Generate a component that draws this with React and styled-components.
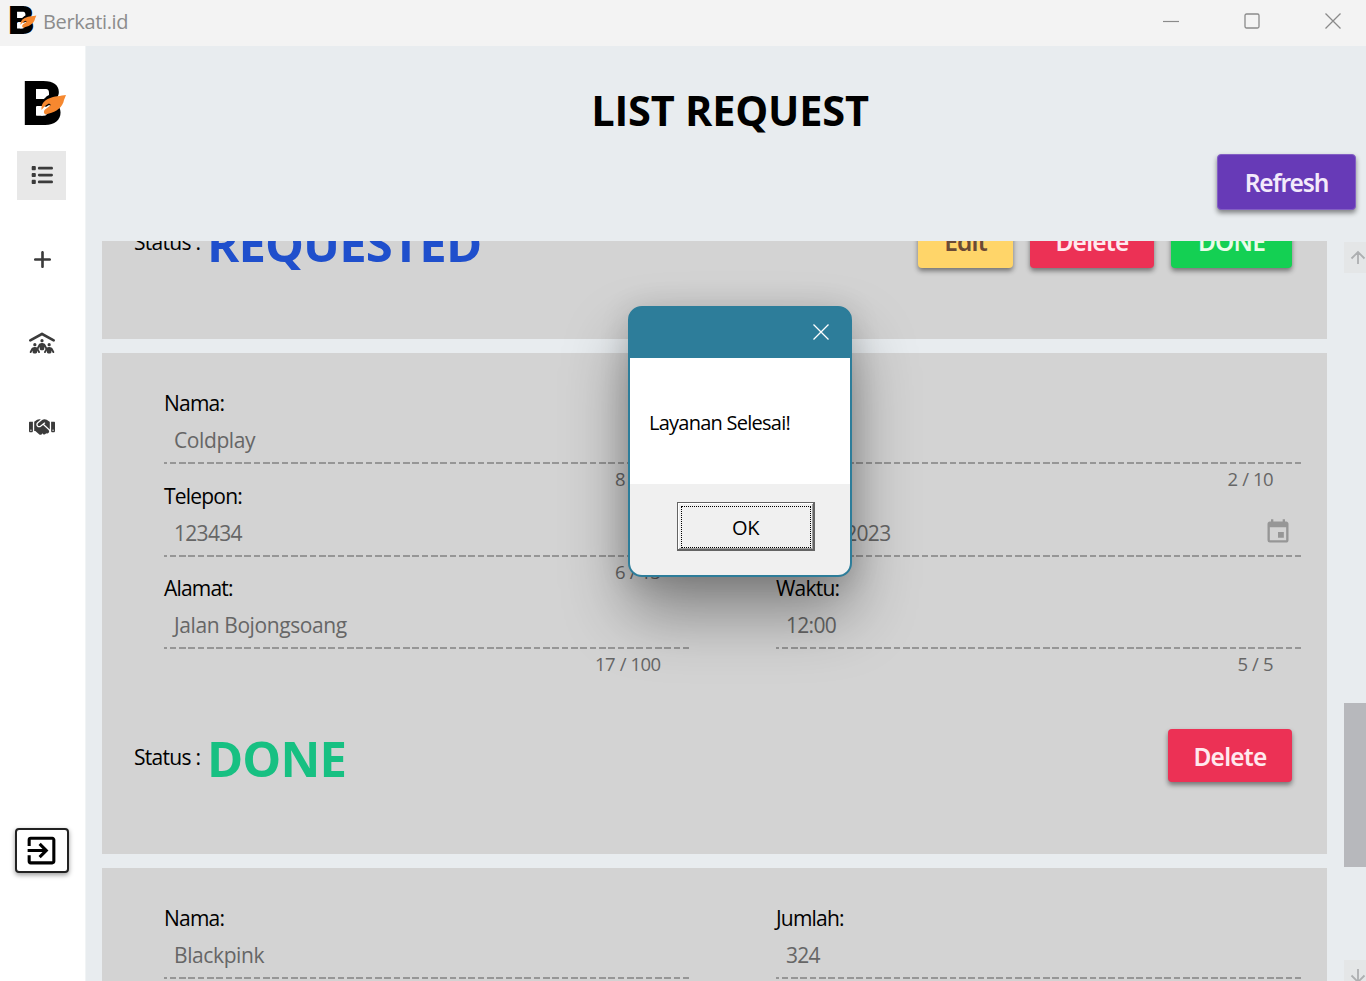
import React from "react";
import styled, { createGlobalStyle } from "styled-components";
import { FaList, FaPlus, FaPeopleRoof, FaHandshake } from "react-icons/fa6";
import { MdExitToApp, MdEvent } from "react-icons/md";

const GlobalStyle = createGlobalStyle`
  * { box-sizing: border-box; }
  body { margin: 0; font-family: "Open Sans", "Noto Sans", sans-serif; color: #000; }
`;

const Window = styled.div`
  position: relative;
  display: flex;
  flex-direction: column;
  width: 1366px;
  height: 981px;
  overflow: hidden;
  background: #e8ecef;
`;

const TitleBar = styled.header`
  flex: none;
  display: flex;
  align-items: center;
  height: 46px;
  padding: 0 25px 5px 10px;
  background: #f3f3f3;
`;

const AppName = styled.span`
  flex: 1;
  margin: 2px 0 0 6px;
  font-size: 20px;
  line-height: 28px;
  letter-spacing: -0.35px;
  color: #8c8c8c;
`;

const WindowControls = styled.div`
  display: flex;
  gap: 65px;

  svg { display: block; }
`;

const Body = styled.div`
  flex: 1;
  min-height: 0;
  display: flex;
`;

const Sidebar = styled.nav`
  flex: none;
  display: flex;
  flex-direction: column;
  align-items: center;
  width: 86px;
  padding: 34px 3px 0 0;
  background: #fff;
  border-right: 1px solid #f1f4f5;
`;

const SidebarLogo = styled.div`
  height: 71px;
  padding-left: 9px;
`;

const NavItem = styled.button`
  display: flex;
  align-items: center;
  justify-content: center;
  width: 49px;
  height: 49px;
  margin-bottom: 35px;
  padding: 0 0 1px 2px;
  border: 0;
  color: #3b3b3b;
  background: ${(p) => (p.$active ? "#e8e8e8" : "transparent")};
`;

const LogoutButton = styled.button`
  display: flex;
  align-items: center;
  justify-content: center;
  width: 54px;
  height: 45px;
  margin: 341px 0 0 1px;
  padding: 0;
  border: 2px solid #222;
  border-radius: 4px;
  background: #fff;
  box-shadow: 0 2px 5px rgba(0, 0, 0, 0.4);
`;

const Main = styled.main`
  flex: 1;
  min-width: 0;
  display: flex;
  flex-direction: column;
`;

const Heading = styled.h1`
  margin: 36px 0 1px 8px;
  font-size: 41.5px;
  line-height: 56px;
  font-weight: 700;
  letter-spacing: -0.2px;
  text-align: center;
`;

const Toolbar = styled.div`
  flex: none;
  display: flex;
  justify-content: flex-end;
  height: 102px;
  padding: 15px 10px 0;
`;

const palette = {
  purple: ["#673ab7", "#f3eafb"],
  red: ["#ec3155", "#ffe9ee"],
  yellow: ["#ffd569", "#6b4a35"],
  green: ["#14d053", "#e9fbe9"],
};

const Button = styled.button`
  width: ${(p) => p.$width}px;
  height: ${(p) => p.$height || 53}px;
  padding: 2px 0 0;
  border: ${(p) => (p.$outlined ? "1.5px solid #8460c4" : "0")};
  border-radius: 4px;
  background: ${(p) => palette[p.$tone][0]};
  color: ${(p) => palette[p.$tone][1]};
  font-family: "Noto Sans", sans-serif;
  font-size: 24.5px;
  line-height: 34px;
  font-weight: 600;
  letter-spacing: ${(p) => p.$tracking || -0.8}px;
  box-shadow: 0 3px 5px rgba(0, 0, 0, 0.45);
`;

const Scroller = styled.div`
  flex: 1;
  min-height: 0;
  display: flex;
  justify-content: space-between;
  padding-left: 16px;
`;

const CardList = styled.div`
  display: flex;
  flex-direction: column;
  gap: 14px;
  width: 1225px;
  overflow: hidden;
`;

const Card = styled.section`
  flex: none;
  display: flex;
  flex-direction: column;
  justify-content: ${(p) => (p.$scrolled ? "flex-end" : "flex-start")};
  height: ${(p) => (p.$scrolled ? 98 : 501)}px;
  background: #d3d3d3;
`;

const Fields = styled.div`
  display: grid;
  grid-template-columns: 524.5px 525px;
  column-gap: 87.5px;
  grid-auto-rows: 92.6px;
  height: 340px;
  padding: 36px 0 0 62px;
`;

const Label = styled.div`
  height: 36px;
  font-size: 21px;
  line-height: 28px;
  letter-spacing: -0.8px;
`;

const ValueRow = styled.div`
  display: flex;
  justify-content: space-between;
  height: 39px;
  padding: 0 9px 0 10px;
  font-size: 21px;
  line-height: 30.5px;
  letter-spacing: ${(p) => (p.$numeric ? -0.7 : -0.4)}px;
  color: #666;
  background: repeating-linear-gradient(90deg, #969696 0 6.6px, transparent 6.6px 9.333px) -3.6px 100% / 529px 2px no-repeat;

  svg { color: #969696; }
`;

const Counter = styled.div`
  margin: 5px 28px 0 0;
  font-size: 18.5px;
  line-height: 19px;
  letter-spacing: -0.6px;
  word-spacing: 0.5px;
  text-align: right;
  color: #666;
`;

const StatusRow = styled.div`
  flex: none;
  display: flex;
  align-items: center;
  gap: 17px;
  height: 53px;
  margin: ${(p) => (p.$bottom ? "0 0 71.5px" : "36px 0 0")};
  padding: 0 35px 0 32px;
`;

const StatusLabel = styled.span`
  width: 56px;
  padding-top: 2px;
  white-space: nowrap;
  font-size: 21px;
  line-height: 28px;
  letter-spacing: -0.7px;
`;

const StatusValue = styled.strong`
  flex: 1;
  padding-top: 4px;
  font-size: 49px;
  line-height: 54px;
  font-weight: 700;
  letter-spacing: -0.9px;
  color: ${(p) => p.$color};
`;

const Scrollbar = styled.div`
  display: flex;
  flex-direction: column;
  width: 22px;
  padding-top: 1px;
  overflow: hidden;
`;

const ScrollArrow = styled.div`
  flex: none;
  height: 31px;
  padding: 8px 0 0 6px;
  overflow: hidden;
  background: #e4e6e7;

  svg { display: block; }
`;

const ScrollThumb = styled.div`
  flex: none;
  height: 164px;
  margin: 430px 0 93px;
  background: #b7b8bc;
`;

const Dialog = styled.div`
  position: absolute;
  left: 628px;
  top: 306px;
  display: flex;
  flex-direction: column;
  width: 224px;
  height: 271px;
  border: 2px solid #2d7d9a;
  border-radius: 14px;
  overflow: hidden;
  background: #2d7d9a;
  box-shadow: 0 36px 64px rgba(0, 0, 0, 0.38), 0 3px 30px rgba(0, 0, 0, 0.14);
`;

const DialogTitle = styled.div`
  display: flex;
  justify-content: flex-end;
  height: 50px;
  padding: 16px 21px 0 0;
  background: #2d7d9a;
`;

const DialogText = styled.div`
  flex: 1;
  padding: 51px 0 0 19px;
  background: #fff;
  font-size: 20px;
  line-height: 28px;
  letter-spacing: -0.75px;
`;

const DialogFooter = styled.div`
  display: flex;
  justify-content: center;
  height: 91px;
  padding: 18px 0 0 11px;
  background: #f0f0f0;
`;

const OkButton = styled.button`
  width: 138px;
  height: 49px;
  padding: 2px 1px 1px;
  border: 1px solid #646464;
  border-right-width: 2px;
  border-bottom-width: 2px;
  background: #f0f0f0;
  box-shadow: inset 1px 1px #fff, inset -1px -1px #a0a0a0;
  font: 20px/28px "Open Sans", sans-serif;
  letter-spacing: -0.4px;
`;

const FocusRing = styled.span`
  display: block;
  height: 42px;
  margin: 0 1px 0 2px;
  padding-top: 7px;
  border: 1px dotted #000;
`;

function Logo({ width, height }) {
  return (
    <svg width={width} height={height} viewBox="0 0 42 46" preserveAspectRatio="none" overflow="visible">
      <text
        x="-2.9"
        y="45"
        fontFamily="Inter, sans-serif"
        fontWeight="900"
        fontSize="60.5"
        textLength="40"
        lengthAdjust="spacingAndGlyphs"
      >
        B
      </text>
      <path d="M11 9h10q3 0 3 4v2q-3 1-5 4h-8zM11 26.500h7v9h-7z" fill="#fff" />
      <path d="M16 30l8-5 2 1-6 5q-1 3 1 4.500h-5z" fill="#fff" />
      <path
        d="M41 15C36 16 29 16 24 18.500C19 20.500 16 24 16.500 30C18.500 27.500 20 25.500 24 23.500L26 25L20 29.500C18.500 31 18.500 33.500 20.500 34.500L24 33.500C31 32 38 27 39 20Z"
        fill="#f6882f"
      />
    </svg>
  );
}

function Cross({ color, size = 16 }) {
  return (
    <svg width={size} height={size} viewBox="0 0 16 16" fill="none" stroke={color} strokeWidth="1.3">
      <path d="M.5.5l15 15M15.500.5l-15 15" />
    </svg>
  );
}

function Arrow({ down }) {
  return (
    <svg width="16" height="16" viewBox="0 0 16 16" fill="none" stroke="#adafb1" strokeWidth="1.8">
      <path d={down ? "M8 1v13M1.500 7.500L8 14l6.500-6.500" : "M8 14V2M1.500 8.500L8 2l6.500 6.500"} />
    </svg>
  );
}

function Field({ label, value, numeric, counter, icon }) {
  return (
    <div>
      <Label>{label}</Label>
      <ValueRow $numeric={numeric}>
        {value}
        {icon}
      </ValueRow>
      {counter && <Counter>{counter}</Counter>}
    </div>
  );
}

export default function App() {
  return (
    <>
      <GlobalStyle />
      <Window>
        <TitleBar>
          <Logo width={27} height={29} />
          <AppName>Berkati.id</AppName>
          <WindowControls>
            <svg width="16" height="16" stroke="#8a8a8a" strokeWidth="1.2"><path d="M0 8.500h16" /></svg>
            <svg width="16" height="16" fill="none" stroke="#8a8a8a" strokeWidth="1.3"><rect x="1" y="1" width="14" height="14" rx="1.500" /></svg>
            <Cross color="#8a8a8a" />
          </WindowControls>
        </TitleBar>
        <Body>
          <Sidebar>
            <SidebarLogo><Logo width={42} height={46} /></SidebarLogo>
            <NavItem $active><FaList size={22} /></NavItem>
            <NavItem><FaPlus size={21} /></NavItem>
            <NavItem><FaPeopleRoof size={26} /></NavItem>
            <NavItem><FaHandshake size={26} /></NavItem>
            <LogoutButton><MdExitToApp size={37} /></LogoutButton>
          </Sidebar>
          <Main>
            <Heading>LIST REQUEST</Heading>
            <Toolbar>
              <Button $tone="purple" $width={139} $height={56} $tracking={-1.1} $outlined>Refresh</Button>
            </Toolbar>
            <Scroller>
              <CardList>
                <Card $scrolled>
                  <StatusRow $bottom>
                    <StatusLabel>Status :</StatusLabel>
                    <StatusValue $color="#1f4fcc">REQUESTED</StatusValue>
                    <Button $tone="yellow" $width={95}>Edit</Button>
                    <Button $tone="red" $width={124}>Delete</Button>
                    <Button $tone="green" $width={121}>DONE</Button>
                  </StatusRow>
                </Card>
                <Card>
                  <Fields>
                    <Field label="Nama:" value="Coldplay" counter="8 / 50" />
                    <Field label="Jumlah:" value="50" numeric counter="2 / 10" />
                    <Field label="Telepon:" value="123434" numeric counter="6 / 13" />
                    <Field label="Tanggal:" value="05/12/2023" numeric icon={<MdEvent size={28} />} />
                    <Field label="Alamat:" value="Jalan Bojongsoang" counter="17 / 100" />
                    <Field label="Waktu:" value="12:00" numeric counter="5 / 5" />
                  </Fields>
                  <StatusRow>
                    <StatusLabel>Status :</StatusLabel>
                    <StatusValue $color="#17c082">DONE</StatusValue>
                    <Button $tone="red" $width={124}>Delete</Button>
                  </StatusRow>
                </Card>
                <Card>
                  <Fields>
                    <Field label="Nama:" value="Blackpink" />
                    <Field label="Jumlah:" value="324" numeric />
                  </Fields>
                </Card>
              </CardList>
              <Scrollbar>
                <ScrollArrow><Arrow /></ScrollArrow>
                <ScrollThumb />
                <ScrollArrow><Arrow down /></ScrollArrow>
              </Scrollbar>
            </Scroller>
          </Main>
        </Body>
        <Dialog>
          <DialogTitle><Cross color="#fff" /></DialogTitle>
          <DialogText>Layanan Selesai!</DialogText>
          <DialogFooter>
            <OkButton><FocusRing>OK</FocusRing></OkButton>
          </DialogFooter>
        </Dialog>
      </Window>
    </>
  );
}
